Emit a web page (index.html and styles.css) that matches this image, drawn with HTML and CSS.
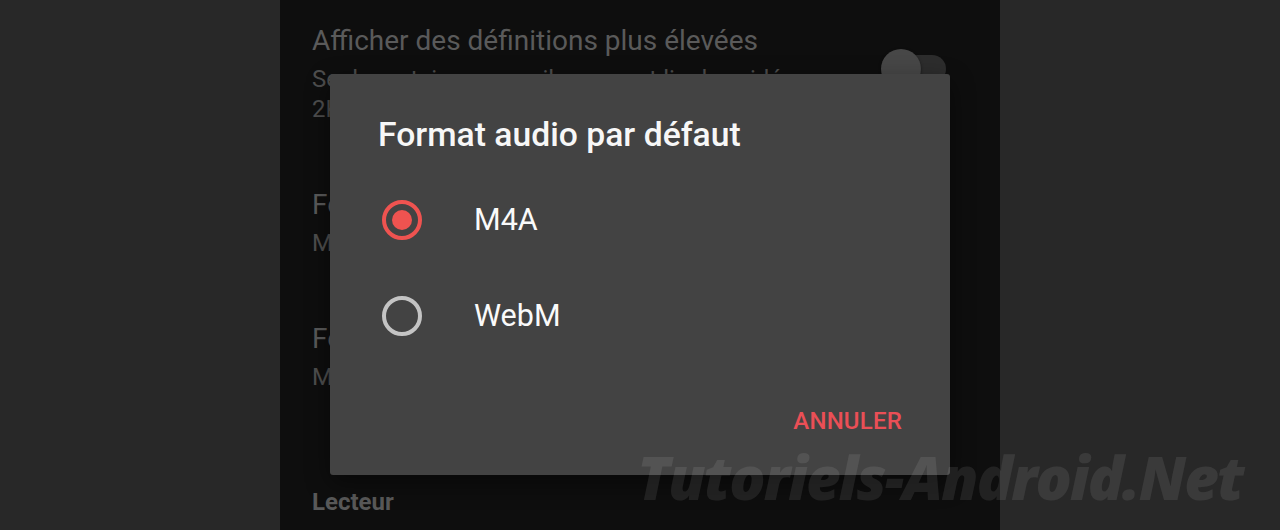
FILE: index.html
```html
<!DOCTYPE html>
<html lang="fr">
<head>
<meta charset="utf-8">
<title>Vidéo et audio</title>
<link rel="stylesheet" href="styles.css">
</head>
<body>
  <main class="phone">
    <section class="settings">
      <div class="pref">
        <div class="pref-text">
          <div class="pref-title">Afficher des définitions plus élevées</div>
          <div class="pref-summary">Seuls certains appareils peuvent lire les vidéos 2K/4K</div>
        </div>
        <div class="switch"><span class="switch-track"></span><span class="switch-thumb"></span></div>
      </div>
      <div class="pref">
        <div class="pref-text">
          <div class="pref-title">Format vidéo par défaut</div>
          <div class="pref-summary">MPEG-4</div>
        </div>
      </div>
      <div class="pref">
        <div class="pref-text">
          <div class="pref-title">Format audio par défaut</div>
          <div class="pref-summary">M4A</div>
        </div>
      </div>
      <div class="category">Lecteur</div>
    </section>

    <div class="dialog" role="dialog" aria-label="Format audio par défaut">
      <h2 class="dialog-title">Format audio par défaut</h2>
      <div class="options">
        <label class="option">
          <span class="radio checked"><span class="radio-dot"></span></span>
          <span class="option-label">M4A</span>
        </label>
        <label class="option">
          <span class="radio"></span>
          <span class="option-label">WebM</span>
        </label>
      </div>
      <div class="actions">
        <button class="btn-text" type="button">ANNULER</button>
      </div>
    </div>
  </main>

  <div class="watermark">Tutoriels-Android.Net</div>
</body>
</html>
```

FILE: styles.css
```css
html, body {
  margin: 0;
  padding: 0;
}

body {
  width: 1280px;
  height: 530px;
  overflow: hidden;
  position: relative;
  display: flex;
  justify-content: center;
  background: #282828;
  font-family: Roboto, "Noto Sans", "Liberation Sans", sans-serif;
}

/* Phone screen */
.phone {
  width: 720px;
  height: 530px;
  position: relative;
  overflow: hidden;
  background: #0e0e0e;
}

/* Preference list underneath the dialog */
.settings {
  padding: 23px 54px 0 32px;
  display: flex;
  flex-direction: column;
}

.pref {
  display: flex;
  justify-content: space-between;
  padding-bottom: 63px;
}

.pref-text {
  width: 510px;
  display: flex;
  flex-direction: column;
  gap: 5px;
}

.pref-title {
  font-size: 28px;
  line-height: 36px;
  color: #5a5a5a;
  white-space: nowrap;
}

.pref-summary {
  font-size: 24px;
  line-height: 30px;
  color: #4e4e4e;
}

.switch {
  position: relative;
  width: 65px;
  height: 40px;
  margin-top: 26px;
}

.switch-track {
  position: absolute;
  right: 0;
  top: 6px;
  width: 60px;
  height: 28px;
  border-radius: 14px;
  background: #2d2d2d;
}

.switch-thumb {
  position: absolute;
  left: 0;
  top: 0;
  width: 40px;
  height: 40px;
  border-radius: 50%;
  background: #474747;
  box-shadow: 0 1px 3px rgba(0, 0, 0, 0.5);
}

.category {
  padding-top: 32px;
  font-size: 24px;
  line-height: 30px;
  font-weight: 700;
  color: #595959;
}

/* Single choice dialog */
.dialog {
  position: absolute;
  left: 50px;
  top: 74px;
  width: 620px;
  background: #434343;
  border-radius: 3px;
  box-shadow: 0 8px 24px rgba(0, 0, 0, 0.45);
  padding: 41px 0 40px;
  display: flex;
  flex-direction: column;
}

.dialog-title {
  margin: 0;
  padding: 0 48px;
  font-size: 33.7px;
  line-height: 40px;
  font-weight: 500;
  color: #f7f7f7;
}

.options {
  margin-top: 17px;
  display: flex;
  flex-direction: column;
}

.option {
  height: 96px;
  display: flex;
  align-items: center;
  gap: 52px;
  padding-left: 52px;
}

.radio {
  width: 40px;
  height: 40px;
  box-sizing: border-box;
  border: 4px solid #c4c4c4;
  border-radius: 50%;
  display: grid;
  place-items: center;
}

.radio.checked {
  border-color: #ef5350;
}

.radio-dot {
  width: 20px;
  height: 20px;
  border-radius: 50%;
  background: #ef5350;
}

.option-label {
  font-size: 30.5px;
  line-height: 40px;
  color: #fafafa;
}

.actions {
  margin-top: 43px;
  display: flex;
  justify-content: flex-end;
  padding-right: 48px;
}

.btn-text {
  border: 0;
  padding: 0;
  background: none;
  font-family: inherit;
  font-size: 24px;
  line-height: 28px;
  font-weight: 500;
  letter-spacing: 0.2px;
  color: #ea4f56;
}

/* Site mark printed over the capture */
.watermark {
  position: absolute;
  left: 637px;
  top: 447px;
  font-family: "Open Sans", "DejaVu Sans", sans-serif;
  font-size: 60px;
  line-height: 60px;
  font-weight: 800;
  font-style: italic;
  letter-spacing: -1.85px;
  color: rgba(255, 255, 255, 0.085);
  white-space: nowrap;
  pointer-events: none;
}
```
